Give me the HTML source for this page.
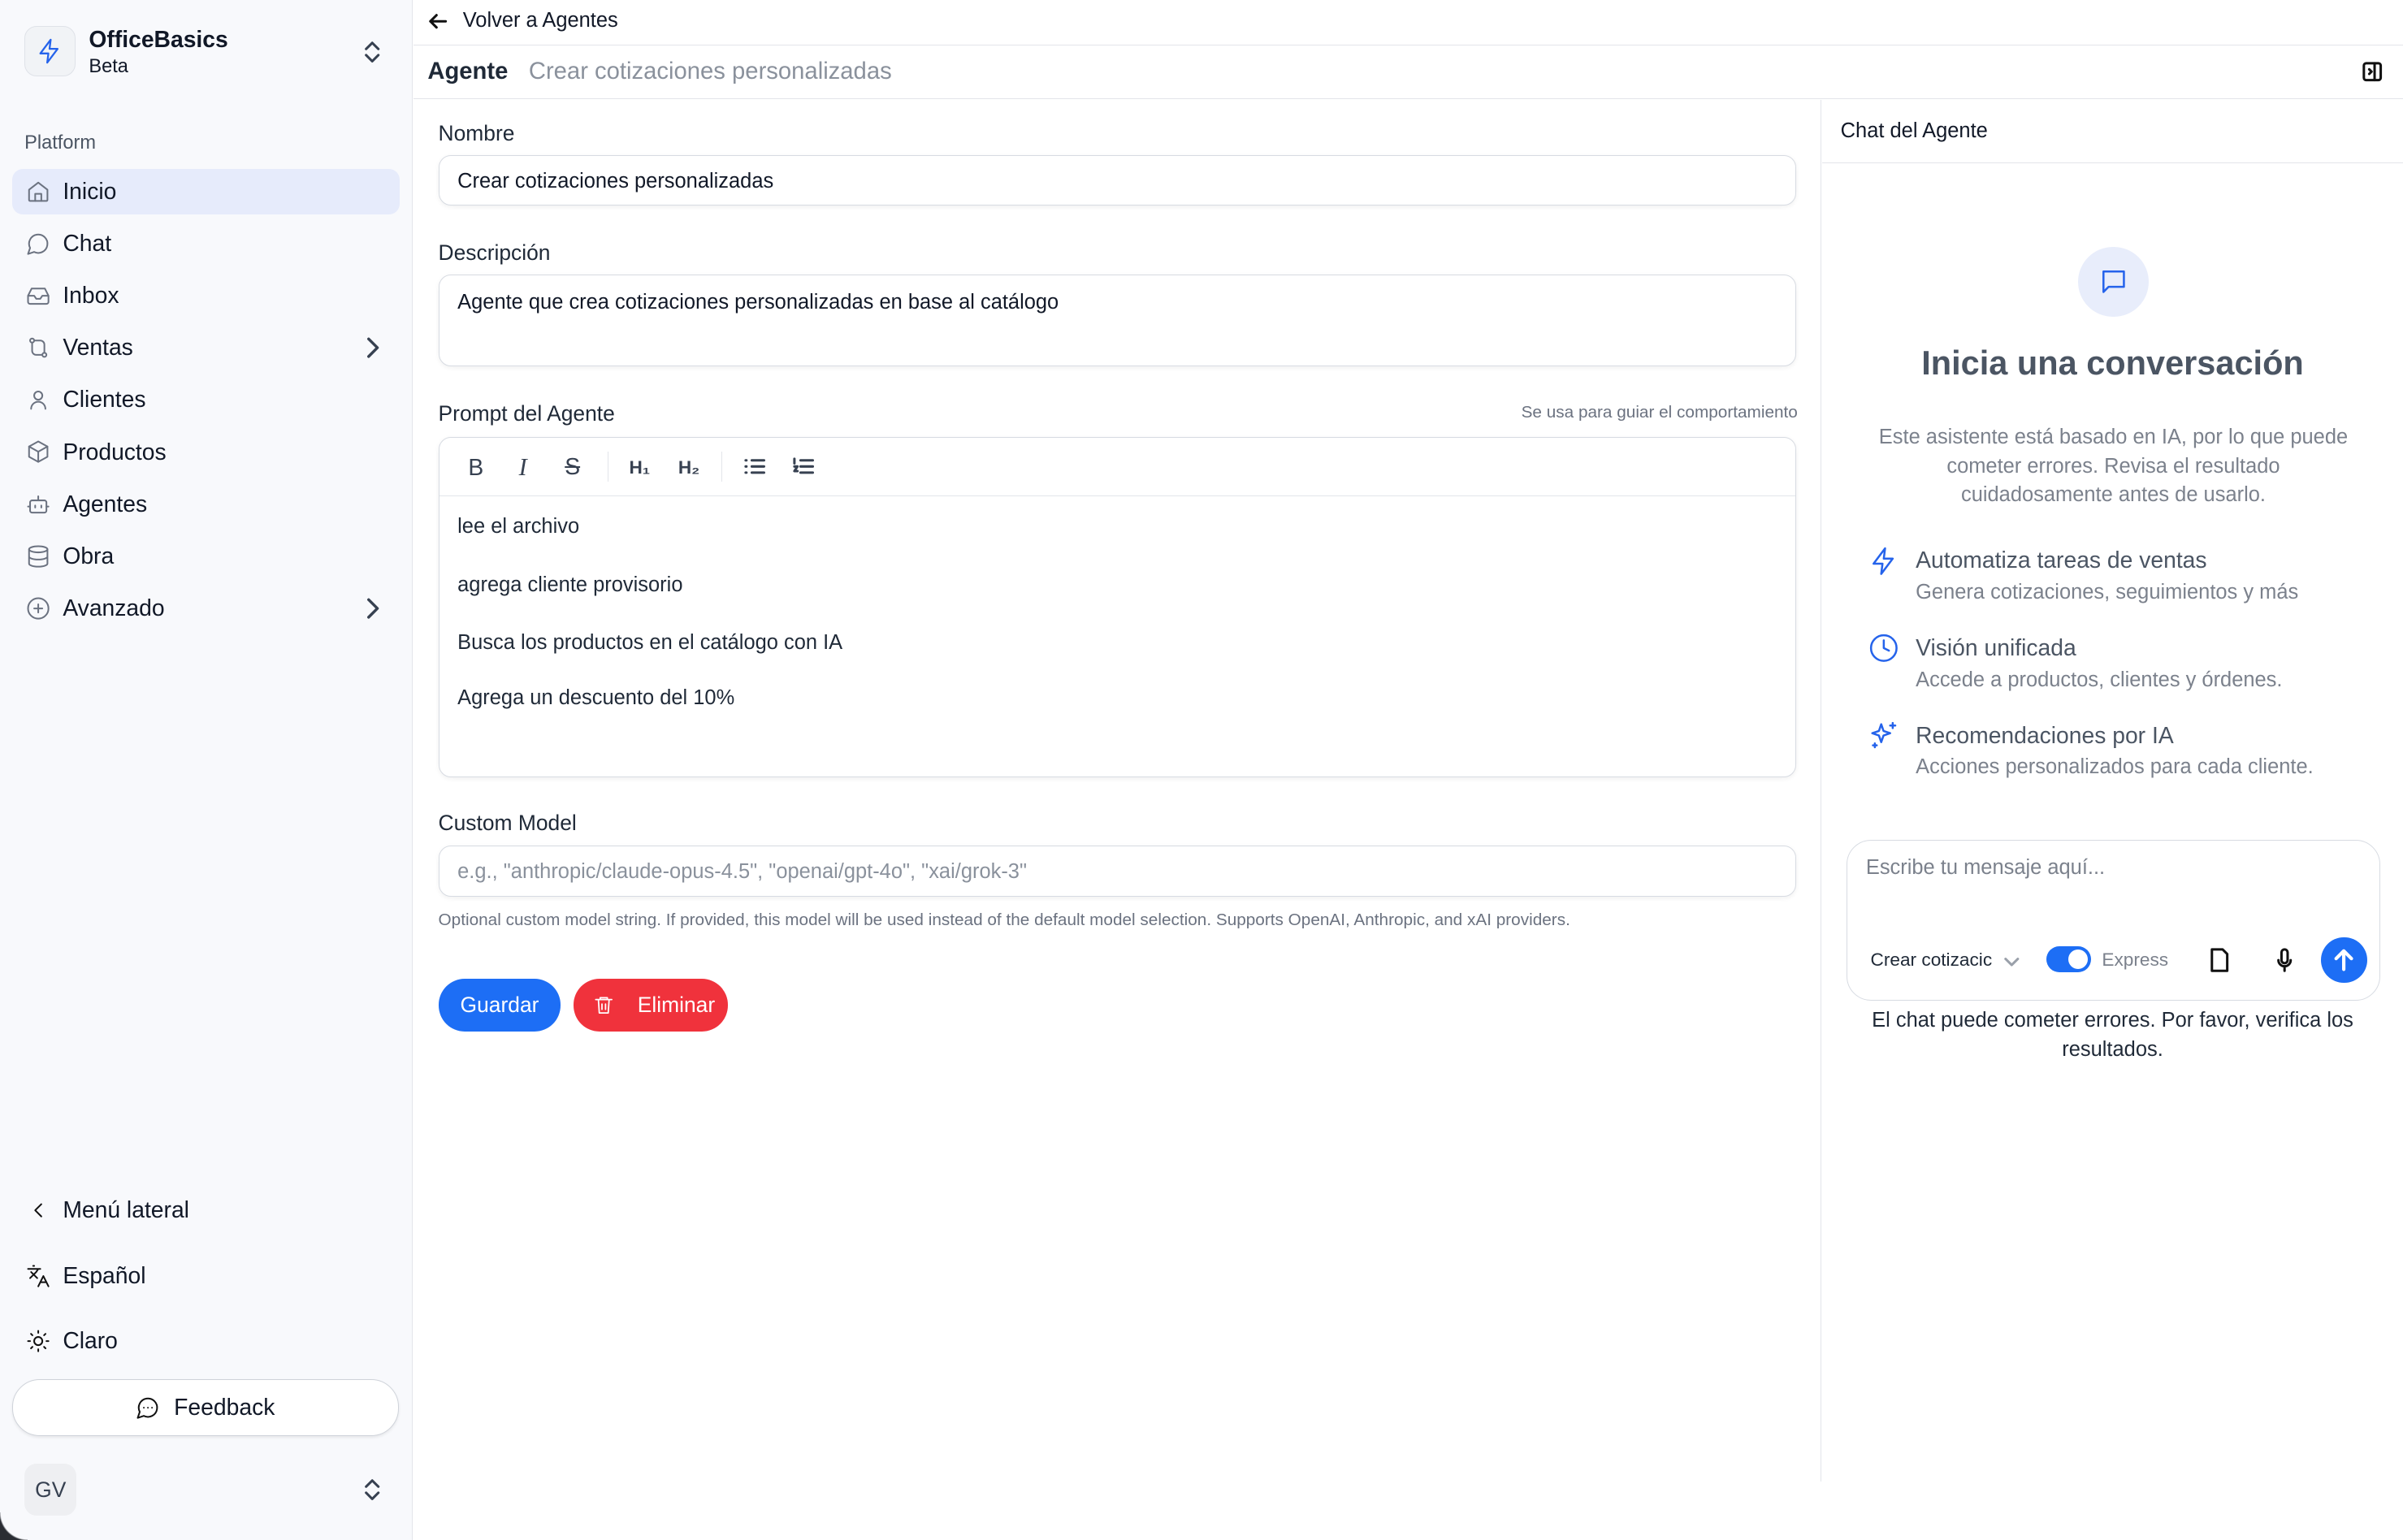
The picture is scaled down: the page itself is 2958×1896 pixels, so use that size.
<!DOCTYPE html>
<html><head><meta charset="utf-8"><style>
html,body{margin:0;padding:0;background:#fff}
body{width:1568px;height:1005px;zoom:1.8865;position:relative;overflow:hidden;font-family:"Liberation Sans",sans-serif;color:#111827}
.a{position:absolute}
svg{fill:none;stroke:currentColor;stroke-width:1.6;stroke-linecap:round;stroke-linejoin:round}
.side{left:0;top:0;width:269px;height:1005px;background:#f8f9fc;border-right:1px solid #e3e5ea}
.nav{left:8px;width:253px;height:30px;font-size:15px;color:#111827}
.nav svg{position:absolute;left:9px;top:7px;width:16px;height:16px;color:#6b7280}
.nav span{position:absolute;left:33px;top:6px}
.chev{position:absolute;right:10px;top:8px;width:14px;height:14px}
.lbl{font-size:14px;color:#1f2937}
.inp{border:1px solid #d7dbe2;border-radius:8px;background:#fff;box-shadow:0 1px 3px rgba(0,0,0,.06);font-size:13.5px}
.tb{font-size:12px;font-weight:bold;color:#374151}
</style></head><body>
<div class="a side">
 <div class="a" style="left:16px;top:17px;width:32px;height:32px;border:1px solid #dfe2e8;border-radius:8px;background:#f1f3f6">
  <svg style="position:absolute;left:7px;top:7px;width:18px;height:18px;color:#2563eb" viewBox="0 0 24 24"><path d="M13 2 4 14h7l-1 8 9-12h-7z"/></svg></div>
 <div class="a" style="left:58px;top:17px;font-size:15px;font-weight:bold">OfficeBasics</div>
 <div class="a" style="left:58px;top:36px;font-size:12.5px">Beta</div>
 <svg class="a" style="left:236px;top:26px;width:14px;height:16px;color:#374151" viewBox="0 0 14 16"><path d="M3 6l4-4 4 4M3 10l4 4 4-4"/></svg>
 <div class="a" style="left:16px;top:86px;font-size:12.5px;color:#4b5563">Platform</div>
 <div class="a nav" style="top:110px;background:#e6ebfb;border-radius:7px"><svg viewBox="0 0 24 24"><path d="M3 10l9-7 9 7v10a1 1 0 0 1-1 1H4a1 1 0 0 1-1-1z"/><path d="M9 21v-7h6v7"/></svg><span>Inicio</span></div>
 <div class="a nav" style="top:144px"><svg viewBox="0 0 24 24"><path d="M7.9 20A9 9 0 1 0 4 16.1L2 22z"/></svg><span>Chat</span></div>
 <div class="a nav" style="top:178px"><svg viewBox="0 0 24 24"><path d="M22 12h-6l-2 3h-4l-2-3H2"/><path d="M5.5 5h13L22 12v6a2 2 0 0 1-2 2H4a2 2 0 0 1-2-2v-6z"/></svg><span>Inbox</span></div>
 <div class="a nav" style="top:212px"><svg viewBox="0 0 24 24"><circle cx="6" cy="5" r="2"/><circle cx="18" cy="19" r="2"/><path d="M6 7v8a4 4 0 0 0 4 4h6M18 17V9a4 4 0 0 0-4-4H8"/></svg><span>Ventas</span><svg class="chev" style="left:auto;color:#374151" viewBox="0 0 14 14"><path d="M5 2l5 5-5 5"/></svg></div>
 <div class="a nav" style="top:246px"><svg viewBox="0 0 24 24"><circle cx="12" cy="8" r="4"/><path d="M5 21a7 7 0 0 1 14 0"/></svg><span>Clientes</span></div>
 <div class="a nav" style="top:280px"><svg viewBox="0 0 24 24"><path d="M12 2l9 5v10l-9 5-9-5V7z"/><path d="M3 7l9 5 9-5M12 12v10"/></svg><span>Productos</span></div>
 <div class="a nav" style="top:314px"><svg viewBox="0 0 24 24"><rect x="4" y="8" width="16" height="12" rx="2"/><path d="M12 8V4M2 14h2M20 14h2M9 13v2M15 13v2"/></svg><span>Agentes</span></div>
 <div class="a nav" style="top:348px"><svg viewBox="0 0 24 24"><ellipse cx="12" cy="5" rx="9" ry="3"/><path d="M3 5v14c0 1.7 4 3 9 3s9-1.3 9-3V5M3 12c0 1.7 4 3 9 3s9-1.3 9-3"/></svg><span>Obra</span></div>
 <div class="a nav" style="top:382px"><svg viewBox="0 0 24 24"><circle cx="12" cy="12" r="10"/><path d="M12 8v8M8 12h8"/></svg><span>Avanzado</span><svg class="chev" style="left:auto;color:#374151" viewBox="0 0 14 14"><path d="M5 2l5 5-5 5"/></svg></div>
 <div class="a nav" style="top:775px"><svg viewBox="0 0 24 24" style="color:#111"><path d="M15 18l-6-6 6-6"/></svg><span>Menú lateral</span></div>
 <div class="a nav" style="top:818px"><svg viewBox="0 0 24 24" style="color:#111"><path d="M5 8l6 6M4 14l6-6 2-3M2 5h12M7 2h1M22 22l-5-10-5 10M14 18h6"/></svg><span>Español</span></div>
 <div class="a nav" style="top:860px"><svg viewBox="0 0 24 24" style="color:#111"><circle cx="12" cy="12" r="4"/><path d="M12 2v2M12 20v2M4.9 4.9l1.4 1.4M17.7 17.7l1.4 1.4M2 12h2M20 12h2M6.3 17.7l-1.4 1.4M19.1 4.9l-1.4 1.4"/></svg><span>Claro</span></div>
 <div class="a" style="left:8px;top:900px;width:251px;height:36px;border:1px solid #cfd3da;border-radius:18px;background:#fff;box-shadow:0 1px 2px rgba(0,0,0,.08)">
  <svg style="position:absolute;left:80px;top:10px;width:16px;height:16px;color:#111" viewBox="0 0 24 24"><path d="M7.9 20A9 9 0 1 0 4 16.1L2 22z"/><path d="M8 12h.01M12 12h.01M16 12h.01"/></svg>
  <span style="position:absolute;left:105px;top:9px;font-size:15px">Feedback</span></div>
 <div class="a" style="left:16px;top:955px;width:34px;height:34px;border-radius:8px;background:#eeeff2;font-size:14px;text-align:center;line-height:34px;color:#374151">GV</div>
 <svg class="a" style="left:236px;top:964px;width:14px;height:16px;color:#374151" viewBox="0 0 14 16"><path d="M3 6l4-4 4 4M3 10l4 4 4-4"/></svg>
 <div class="a" style="left:0;top:987px;width:18px;height:18px;background:radial-gradient(circle at 18px 0,transparent 17.5px,#2a2d33 18.5px)"></div>
</div>
<!-- main header -->
<svg class="a" style="left:279px;top:7px;width:14px;height:14px;color:#111" viewBox="0 0 14 14"><path d="M12 7H2M6 3L2 7l4 4"/></svg>
<div class="a" style="left:302px;top:6px;font-size:13.5px">Volver a Agentes</div>
<div class="a" style="left:270px;top:29px;width:1298px;border-top:1px solid #e3e5ea"></div>
<div class="a" style="left:279px;top:38px;font-size:15.5px;font-weight:bold;color:#1f2937">Agente</div>
<div class="a" style="left:345px;top:38px;font-size:15.5px;color:#8a919c">Crear cotizaciones personalizadas</div>
<svg class="a" style="left:1541px;top:40px;width:14px;height:14px;color:#111" viewBox="0 0 14 14"><rect x="1.5" y="1.5" width="11" height="11" rx="1.5"/><path d="M8.5 1.5v11M5 5.5l1.5 1.5L5 8.5"/></svg>
<div class="a" style="left:270px;top:64px;width:1298px;border-top:1px solid #e3e5ea"></div>
<div class="a" style="left:1188px;top:65px;height:902px;border-left:1px solid #e3e5ea"></div>
<!-- form -->
<div class="a lbl" style="left:286px;top:79px">Nombre</div>
<div class="a inp" style="left:286px;top:101px;width:885px;height:32px"><span style="position:absolute;left:12px;top:9px">Crear cotizaciones personalizadas</span></div>
<div class="a lbl" style="left:286px;top:157px">Descripción</div>
<div class="a inp" style="left:286px;top:179px;width:885px;height:59px"><span style="position:absolute;left:12px;top:10px">Agente que crea cotizaciones personalizadas en base al catálogo</span></div>
<div class="a lbl" style="left:286px;top:262px">Prompt del Agente</div>
<div class="a" style="left:900px;width:273px;text-align:right;top:263px;font-size:11px;color:#6b7280">Se usa para guiar el comportamiento</div>
<div class="a inp" style="left:286px;top:285px;width:885px;height:221px">
 <div style="position:absolute;left:0;top:38px;width:885px;border-top:1px solid #e3e5ea"></div>
 <span class="a" style="left:19px;top:11px;font-size:15px;color:#374151">B</span>
 <span class="a" style="left:52px;top:10px;font-size:16px;font-style:italic;font-family:'Liberation Serif',serif;color:#374151">I</span>
 <span class="a" style="left:82px;top:10px;font-size:15px;text-decoration:line-through;color:#374151">S</span>
 <div class="a" style="left:110px;top:9px;height:20px;border-left:1px solid #e3e5ea"></div>
 <span class="a tb" style="left:124px;top:13px">H₁</span>
 <span class="a tb" style="left:156px;top:13px">H₂</span>
 <div class="a" style="left:184px;top:9px;height:20px;border-left:1px solid #e3e5ea"></div>
 <svg class="a" style="left:199px;top:13px;width:14px;height:12px;color:#374151" viewBox="0 0 14 12"><path d="M5 2h8M5 6h8M5 10h8M1 2h.5M1 6h.5M1 10h.5"/></svg>
 <svg class="a" style="left:231px;top:13px;width:14px;height:12px;color:#374151" viewBox="0 0 14 12"><path d="M5 2h8M5 6h8M5 10h8M1 1v3M1 6h2l-2 3h2"/></svg>
 <div class="a" style="left:12px;top:49px;font-size:13.5px;color:#1f2937;line-height:19px">lee el archivo<br><br style="line-height:19px"><div style="margin-top:0">agrega cliente provisorio</div><div style="margin-top:19px">Busca los productos en el catálogo con IA</div><div style="margin-top:17px">Agrega un descuento del 10%</div></div>
</div>
<div class="a lbl" style="left:286px;top:529px">Custom Model</div>
<div class="a inp" style="left:286px;top:552px;width:885px;height:32px"><span style="position:absolute;left:12px;top:9px;color:#8a919c">e.g., "anthropic/claude-opus-4.5", "openai/gpt-4o", "xai/grok-3"</span></div>
<div class="a" style="left:286px;top:594px;font-size:11px;color:#6b7280">Optional custom model string. If provided, this model will be used instead of the default model selection. Supports OpenAI, Anthropic, and xAI providers.</div>
<div class="a" style="left:286px;top:639px;width:80px;height:34px;border-radius:17px;background:#1d6ef5;color:#fff;font-size:14px;text-align:center;line-height:34px">Guardar</div>
<div class="a" style="left:374px;top:639px;width:101px;height:34px;border-radius:17px;background:#f0323c;color:#fff;font-size:14px">
 <svg style="position:absolute;left:13px;top:10px;width:14px;height:14px;color:#fff" viewBox="0 0 24 24"><path d="M3 6h18M8 6V4h8v2M6 6l1 15h10l1-15M10 11v6M14 11v6"/></svg>
 <span style="position:absolute;left:42px;top:9px">Eliminar</span></div>
<!-- chat panel -->
<div class="a" style="left:1201px;top:78px;font-size:13.5px">Chat del Agente</div>
<div class="a" style="left:1189px;top:106px;width:379px;border-top:1px solid #e3e5ea"></div>
<div class="a" style="left:1356px;top:161px;width:46px;height:46px;border-radius:23px;background:#e8edfb">
 <svg style="position:absolute;left:13px;top:13px;width:20px;height:20px;color:#2563eb" viewBox="0 0 24 24"><path d="M4 4h16v12H8l-4 4z"/></svg></div>
<div class="a" style="left:1189px;top:224px;width:379px;text-align:center;font-size:22px;font-weight:bold;color:#4b5563">Inicia una conversación</div>
<div class="a" style="left:1222px;top:276px;width:314px;text-align:center;font-size:13.5px;color:#7b818c;line-height:19px">Este asistente está basado en IA, por lo que puede cometer errores. Revisa el resultado cuidadosamente antes de usarlo.</div>
<svg class="a" style="left:1219px;top:356px;width:20px;height:20px;color:#2563eb" viewBox="0 0 24 24"><path d="M13 2 4 14h7l-1 8 9-12h-7z"/></svg>
<div class="a" style="left:1250px;top:357px;font-size:15px;color:#4b5563">Automatiza tareas de ventas</div>
<div class="a" style="left:1250px;top:379px;font-size:13.5px;color:#7b818c">Genera cotizaciones, seguimientos y más</div>
<svg class="a" style="left:1219px;top:413px;width:20px;height:20px;color:#2563eb" viewBox="0 0 24 24"><circle cx="12" cy="12" r="10"/><path d="M12 6v6l4 2"/></svg>
<div class="a" style="left:1250px;top:414px;font-size:15px;color:#4b5563">Visión unificada</div>
<div class="a" style="left:1250px;top:436px;font-size:13.5px;color:#7b818c">Accede a productos, clientes y órdenes.</div>
<svg class="a" style="left:1219px;top:470px;width:20px;height:20px;color:#2563eb" viewBox="0 0 24 24"><path d="M10 3l1.8 5.2L17 10l-5.2 1.8L10 17l-1.8-5.2L3 10l5.2-1.8zM19 2v4M17 4h4M5 18v3M3.5 19.5h3"/></svg>
<div class="a" style="left:1250px;top:471px;font-size:15px;color:#4b5563">Recomendaciones por IA</div>
<div class="a" style="left:1250px;top:493px;font-size:13.5px;color:#7b818c">Acciones personalizados para cada cliente.</div>
<div class="a" style="left:1205px;top:548px;width:347px;height:104px;border:1px solid #d7dbe2;border-radius:16px;background:#fff">
 <span class="a" style="left:12px;top:10px;font-size:13.5px;color:#7b818c">Escribe tu mensaje aquí...</span>
 <span class="a" style="left:15px;top:71px;font-size:12px;color:#1f2937">Crear cotizacic</span>
 <svg class="a" style="left:101px;top:73px;width:12px;height:12px;color:#9aa0aa" viewBox="0 0 12 12"><path d="M2 4l4 4 4-4"/></svg>
 <div class="a" style="left:130px;top:69px;width:29px;height:17px;border-radius:9px;background:#1d6ef5"><div style="position:absolute;left:14px;top:2px;width:13px;height:13px;border-radius:7px;background:#fff"></div></div>
 <span class="a" style="left:166px;top:71px;font-size:12px;color:#7b818c">Express</span>
 <svg class="a" style="left:236px;top:70px;width:14px;height:16px;color:#111" viewBox="0 0 14 16"><path d="M2 1h7l3 3v11H2z"/></svg>
 <svg class="a" style="left:278px;top:70px;width:14px;height:16px;color:#111" viewBox="0 0 14 16"><rect x="5" y="1" width="4" height="9" rx="2"/><path d="M3 8a4 4 0 0 0 8 0M7 12v3"/></svg>
 <div class="a" style="left:309px;top:63px;width:30px;height:30px;border-radius:15px;background:#1d6ef5">
  <svg style="position:absolute;left:7px;top:7px;width:16px;height:16px;color:#fff;stroke-width:2.2" viewBox="0 0 16 16"><path d="M8 14V2M3 7l5-5 5 5"/></svg></div>
</div>
<div class="a" style="left:1205px;top:657px;width:347px;text-align:center;font-size:13.5px;line-height:19px;color:#1f2937">El chat puede cometer errores. Por favor, verifica los resultados.</div>
</body></html>
